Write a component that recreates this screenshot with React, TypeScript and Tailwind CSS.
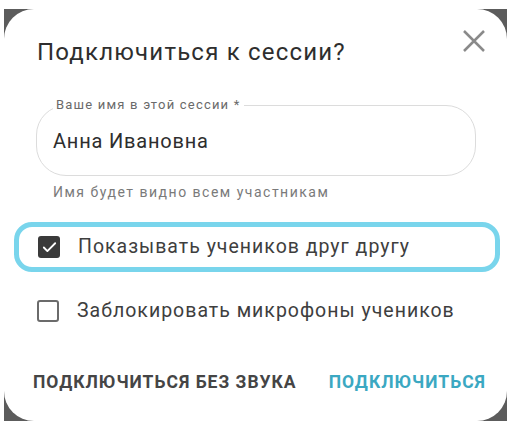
import { Check } from 'lucide-react';

const font = { fontFamily: 'Roboto, "Liberation Sans", sans-serif' };

function Checkbox({ checked }: { checked: boolean }) {
  if (checked) {
    return (
      <span className="flex size-[22px] shrink-0 items-center justify-center rounded-[3px] bg-[#3a3a3a]">
        <Check className="size-[17px] text-white" strokeWidth={2.6} />
      </span>
    );
  }
  return <span className="size-[22px] shrink-0 rounded-[3px] border-2 border-[#6b6b6b] bg-white" />;
}

export default function App() {
  return (
    <div className="h-[432px] w-[521px] bg-white pl-[4px] pt-[9px]" style={font}>
      <div className="h-[412px] w-[503px] bg-[#5c5c5c]">
        <div className="relative flex h-full flex-col rounded-[30px] bg-white">
          <button className="absolute right-[22px] top-[21px]">
            <svg width="22" height="22" viewBox="0 0 22 22" fill="none" stroke="#8a8a8a" strokeWidth="2.5">
              <path d="M1 1L21 21M21 1L1 21" />
            </svg>
          </button>

          <h2 className="pl-[33px] pt-[26px] text-[24px] leading-[34px] tracking-[1.2px] text-[#2e2e2e]">
            Подключиться к сессии?
          </h2>

          <div className="relative ml-[32px] mr-[31px] mt-[36px] h-[71px] rounded-[30px] border border-[#dcdcdc]">
            <span className="absolute -top-[9px] left-[16px] bg-white px-[3px] text-[13px] leading-[16px] tracking-[1.2px] text-[#6a6a6a]">
              Ваше имя в этой сессии *
            </span>
            <div className="flex h-full items-center pl-[16px] text-[20px] tracking-[0.8px] text-[#2e2e2e]">
              Анна Ивановна
            </div>
          </div>
          <div className="pl-[49px] pt-[6px] text-[14px] leading-[20px] tracking-[1.5px] text-[#7a7a7a]">
            Имя будет видно всем участникам
          </div>

          <div className="ml-[10px] mr-[7px] mt-[20px] flex h-[50px] items-center gap-[18px] rounded-[18px] border-[5px] border-[#79d5ec] pl-[19px]">
            <Checkbox checked />
            <span className="text-[19.5px] tracking-[1px] text-[#3e3e3e]">Показывать учеников друг другу</span>
          </div>

          <div className="mt-[24px] flex h-[30px] items-center gap-[18px] pl-[33px]">
            <Checkbox checked={false} />
            <span className="text-[19.5px] tracking-[1px] text-[#3e3e3e]">Заблокировать микрофоны учеников</span>
          </div>

          <div className="mb-[27px] mt-auto flex h-[24px] items-center justify-between pl-[29px] pr-[21px]">
            <button className="text-[17.5px] font-bold tracking-[1px] text-[#454545]">ПОДКЛЮЧИТЬСЯ БЕЗ ЗВУКА</button>
            <button className="text-[17.5px] font-bold tracking-[1px] text-[#3ba8c2]">ПОДКЛЮЧИТЬСЯ</button>
          </div>
        </div>
      </div>
    </div>
  );
}
